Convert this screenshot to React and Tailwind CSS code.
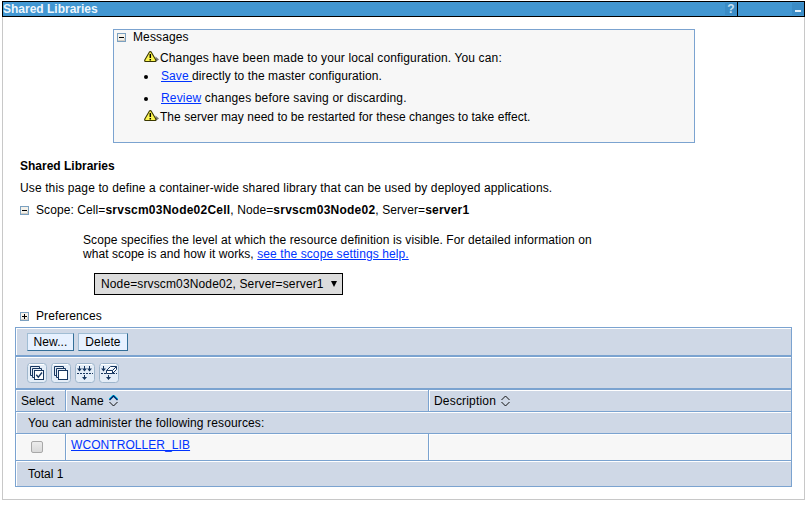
import React from "react";

function Toggle({ plus }) {
  return (
    <svg width="9" height="9" viewBox="0 0 9 9" shapeRendering="crispEdges" className="block shrink-0">
      <rect x="0.5" y="0.5" width="8" height="8" fill="#f4f1ea" stroke="#7ba0c0" />
      <path d="M1 7.5H8M7.5 5V8" stroke="#d2cdc4" />
      <path d="M2 4.5H7" stroke="#000" />
      {plus && <path d="M4.5 2V7" stroke="#000" />}
    </svg>
  );
}

function Warning() {
  return (
    <svg width="16" height="12" viewBox="0 0 16 12" className="block shrink-0">
      <path d="M11.5 5.5l3.5 2.9L11.5 11z" fill="#777" />
      <path d="M5.3 1.2Q6.3 0 7.3 1.2L11.8 9Q12.3 10.5 10.8 10.5H1.8Q0.3 10.5 0.8 9Z" fill="#fdf650" stroke="#3a3800" strokeWidth="1.1" />
      <path d="M6.3 3V7M6.3 8V9.4" stroke="#000" strokeWidth="1.5" />
    </svg>
  );
}

function Link({ children }) {
  return <a href="#" className="text-[#0033ff] underline">{children}</a>;
}

function IconButton({ children }) {
  return (
    <svg width="20" height="20" viewBox="0 0 20 20" className="block shrink-0">
      <rect x="0.5" y="0.5" width="19" height="19" rx="3" fill="#e4edf7" stroke="#9fb6cc" />
      <path d="M2 1.5H17" stroke="#fff" />
      <g fill="none" stroke="#17365f">{children}</g>
    </svg>
  );
}

function Sheets({ checked }) {
  return (
    <IconButton>
      <path d="M5 12.5H3.5V3.5H12.5V5M7 14.5H5.5V5.5H14.5V7" />
      <rect x="7.5" y="7.5" width="9" height="9" fill="#fff" />
      {checked && <path d="M9.3 11.8l2 2.4L15 9.5" strokeWidth="1.4" />}
    </IconButton>
  );
}

function Sort({ active }) {
  return (
    <svg width="9" height="12" viewBox="0 0 9 12" className="block shrink-0">
      {active && <path d="M0.5 4.5L4.5 0.5L8.5 4.5" fill="none" stroke="#00d5f5" strokeWidth="2" />}
      <path d="M0.5 5L4.5 1L8.5 5" fill="none" stroke={active ? "#001a66" : "#111"} strokeWidth={active ? 1.3 : 1} />
      <path d="M0.5 7L4.5 11L8.5 7" fill="none" stroke="#111" />
    </svg>
  );
}

const cell = "border-l border-t border-white";
const line = "border-[#7ba3d0]";
const bullet = "mr-[13px] mt-px h-1 w-1 rounded-full bg-black";
const button = "h-[18px] border border-b-[#336f99] border-l-[#a0bdd4] border-r-[#336f99] border-t-[#a0bdd4] bg-[#e7f1ff] tracking-[0.1px]";

export default function App() {
  return (
    <div className="h-[507px] w-[812px] overflow-hidden bg-white pl-[2px] pt-px font-['Liberation_Sans',Arial,sans-serif] text-[12px] leading-[14px] text-black">
      <header className="flex h-4 w-[803px] border border-black bg-[#4297d2]">
        <div className="flex w-[734px] justify-between">
          <h1 className="font-bold text-[#eef6fc]">Shared Libraries</h1>
          <div className="mt-px flex h-3 w-3 items-center justify-center bg-[#3b8cc6] text-[12px] font-bold leading-3 text-[#c5e0f3]">?</div>
        </div>
        <div className="flex flex-1 justify-end border-l border-black">
          <div className="mt-px flex h-3 w-3 items-end justify-center bg-[#3b8cc6] pb-[3px]">
            <div className="h-[2px] w-[6px] bg-[#e3f2fc]" />
          </div>
        </div>
      </header>

      <main className="h-[483px] w-[803px] border-x border-b border-[#c8c8c8] pt-3">
        <section className="ml-[110px] h-[114px] w-[582px] border border-[#7ba3d0] bg-[#f7f7f7]">
          <div className="flex gap-[7px] pl-[3px]">
            <div className="pt-[3px]"><Toggle /></div>
            <span className="tracking-[0.12px]">Messages</span>
          </div>
          <div className="mt-[7px] flex pl-[30px]"><Warning /><span className="tracking-[0.138px]">Changes have been made to your local configuration. You can:</span></div>
          <ul className="mt-1 flex flex-col gap-2 pl-[30px]">
            <li className="flex items-center"><i className={bullet} /><span className="whitespace-pre tracking-[0.08px]"><Link>Save </Link>directly to the master configuration.</span></li>
            <li className="flex items-center"><i className={bullet} /><span className="tracking-[0.16px]"><Link>Review</Link> changes before saving or discarding.</span></li>
          </ul>
          <div className="mt-[5px] flex pl-[30px]"><Warning /><span className="tracking-[0.035px]">The server may need to be restarted for these changes to take effect.</span></div>
        </section>

        <section className="pl-[17px] pt-4">
          <h2 className="font-bold">Shared Libraries</h2>
          <p className="mt-2 tracking-[0.122px]">Use this page to define a container-wide shared library that can be used by deployed applications.</p>
          <div className="mt-2 flex gap-[7px]">
            <div className="pt-[3px]"><Toggle /></div>
            <span className="tracking-[0.09px]">Scope: Cell=<b className="tracking-[0.23px]">srvscm03Node02Cell</b>, Node=<b className="tracking-[0.23px]">srvscm03Node02</b>, Server=<b className="tracking-[0.2px]">server1</b></span>
          </div>
          <p className="ml-[63px] mt-4 tracking-[0.1px]">
            Scope specifies the level at which the resource definition is visible. For detailed information on<br />
            <span className="tracking-[0.065px]">what scope is and how it works, </span><Link>see the scope settings help.</Link>
          </p>
          <div className="ml-[74px] mt-3 flex h-[22px] w-[249px] items-start border border-black bg-[#dcdcdc] pl-[6px] pt-[3px]">
            <span className="tracking-[0.13px]">Node=srvscm03Node02, Server=server1</span>
            <svg width="6" height="6" viewBox="0 0 6 6" className="ml-[7px] mt-1"><path d="M0 0H6L3 6Z" /></svg>
          </div>
          <div className="mt-[14px] flex gap-[7px]">
            <div className="pt-[3px]"><Toggle plus /></div>
            <span className="tracking-[0.1px]">Preferences</span>
          </div>
        </section>

        <section className={`ml-3 mt-1 w-[777px] border bg-[#cfd8e6] ${line}`}>
          <div className={`h-[29px] border-b-2 ${line}`}>
            <div className={`flex h-[27px] gap-1 pl-[10px] pt-1 ${cell}`}>
              <button className={`w-[47px] ${button}`}>New...</button>
              <button className={`w-[50px] ${button}`}>Delete</button>
            </div>
          </div>
          <div className={`h-[33px] border-b-2 ${line}`}>
            <div className={`flex h-[31px] gap-1 pl-[10px] pt-[5px] ${cell}`}>
              <Sheets checked />
              <Sheets />
              <IconButton>
                <path d="M2 10.5H18" strokeDasharray="2 1" />
                <path d="M4.5 3V7M9.5 3V7M14.5 3V7M9.5 12V15" />
                <path d="M2 5.5H7L4.5 8.5ZM7 5.5H12L9.5 8.5ZM12 5.5H17L14.5 8.5ZM7 14H12L9.5 17Z" fill="#17365f" stroke="none" />
              </IconButton>
              <IconButton>
                <path d="M2 10.5H7M14 10.5H18" strokeDasharray="2 1" />
                <path d="M4.5 3V7M9.5 12V15" />
                <path d="M2 5.5H7L4.5 8.5ZM7 14H12L9.5 17Z" fill="#17365f" stroke="none" />
                <path d="M7.5 7.5L11.5 3.5H17.5V6.5L13.5 10.5H7.5ZM7.5 7.5H13.5L17.5 3.5M13.5 7.5V10.5" fill="#fff" />
              </IconButton>
            </div>
          </div>
          <div className={`flex h-[22px] border-b ${line}`}>
            <div className={`w-[49px] pl-1 pt-[3px] ${cell}`}>Select</div>
            <div className={`w-[363px] border-l ${line}`}>
              <div className={`flex h-full pl-1 pt-[3px] ${cell}`}><span className="mr-[5px] tracking-[0.25px]">Name</span><div className="pt-px"><Sort active /></div></div>
            </div>
            <div className={`flex-1 border-l ${line}`}>
              <div className={`flex h-full pl-1 pt-[3px] ${cell}`}><span className="mr-[5px] tracking-[0.18px]">Description</span><div className="pt-px"><Sort /></div></div>
            </div>
          </div>
          <div className={`h-[22px] border-b ${line}`}>
            <div className={`h-full pl-[11px] pt-[3px] tracking-[0.125px] ${cell}`}>You can administer the following resources:</div>
          </div>
          <div className={`flex h-[27px] border-b bg-[#f7f7f7] ${line}`}>
            <div className={`w-[49px] pl-[14px] pt-[6px] ${cell}`}>
              <div className="h-3 w-3 rounded-[2px] border border-[#a8a8a8] bg-gradient-to-b from-[#ececec] to-[#d9d9d9]" />
            </div>
            <div className={`w-[363px] border-l ${line}`}>
              <div className={`h-full pl-1 pt-[3px] tracking-[0.07px] ${cell}`}><Link>WCONTROLLER_LIB</Link></div>
            </div>
            <div className={`flex-1 border-l ${line}`}><div className={`h-full ${cell}`} /></div>
          </div>
          <div className={`h-[25px] pl-[11px] pt-[5px] ${cell}`}>Total 1</div>
        </section>
      </main>
    </div>
  );
}
